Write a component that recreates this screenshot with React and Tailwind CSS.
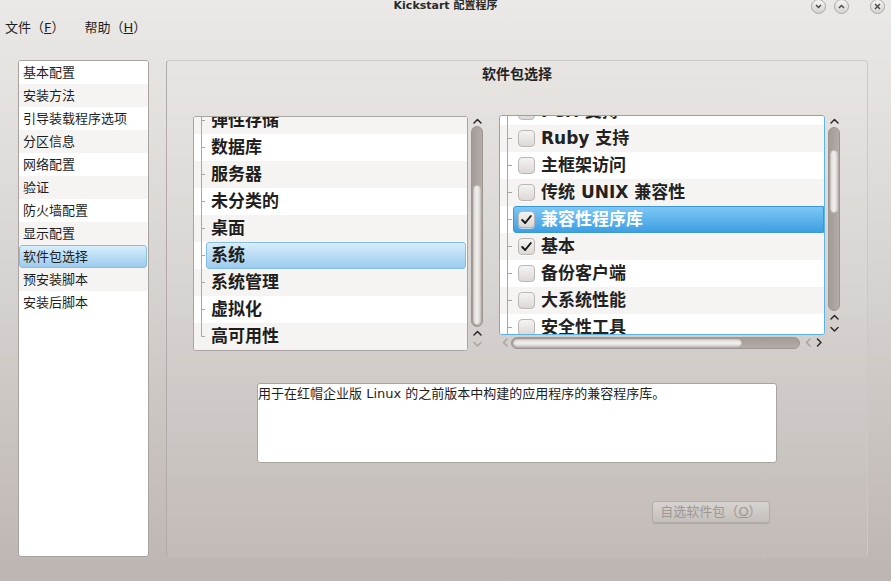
import React from 'react';

const sections = [
  '基本配置', '安装方法', '引导装载程序选项', '分区信息', '网络配置', '验证',
  '防火墙配置', '显示配置', '软件包选择', '预安装脚本', '安装后脚本',
];

const groups = ['弹性存储', '数据库', '服务器', '未分类的', '桌面', '系统', '系统管理', '虚拟化', '高可用性'];

const packages = [
  { name: 'Perl 支持', checked: false },
  { name: 'Ruby 支持', checked: false },
  { name: '主框架访问', checked: false },
  { name: '传统 UNIX 兼容性', checked: false },
  { name: '兼容性程序库', checked: true, selected: true },
  { name: '基本', checked: true },
  { name: '备份客户端', checked: false },
  { name: '大系统性能', checked: false },
  { name: '安全性工具', checked: false },
];

const Chevron = ({ dir = 'up', light = false }) => {
  const paths = {
    up: 'M1 5 L4.5 1.5 L8 5',
    down: 'M1 1.5 L4.5 5 L8 1.5',
    left: 'M5 1 L1.5 4.5 L5 8',
    right: 'M1.5 1 L5 4.5 L1.5 8',
  };
  const vertical = dir === 'up' || dir === 'down';
  return (
    <svg width={vertical ? 9 : 7} height={vertical ? 7 : 9} viewBox={vertical ? '0 0 9 7' : '0 0 7 9'}>
      <path d={paths[dir]} fill="none" stroke={light ? '#aaa5a1' : '#2c2c2c'} strokeWidth="1.5" strokeLinecap="round" strokeLinejoin="round" />
    </svg>
  );
};

const TreeGutter = ({ last, width }) => (
  <svg width={width} height="27" className="shrink-0">
    <line x1="7.5" y1="0" x2="7.5" y2={last ? 13.5 : 27} stroke="#aaa6a2" strokeWidth="1" />
    <line x1="7.5" y1="13.5" x2={width - 1} y2="13.5" stroke="#aaa6a2" strokeWidth="1" />
  </svg>
);

const CheckBox = ({ checked }) => (
  <div className="w-[17px] h-[17px] shrink-0 rounded-[4px] border border-[#bcb7b3] bg-gradient-to-b from-[#f5f4f3] to-[#dcd8d5] shadow-[0_1px_0_rgba(255,255,255,0.6)] flex items-center justify-center">
    {checked && (
      <svg width="13" height="13" viewBox="0 0 13 13">
        <path d="M2.2 7 L5.2 10 L10.8 3" fill="none" stroke="#1a1a1a" strokeWidth="2" strokeLinecap="round" strokeLinejoin="round" />
      </svg>
    )}
  </div>
);

const Groove = ({ grooveClass, handleClass }) => (
  <div className={`w-[12px] rounded-[6px] border border-[#9d9591] bg-gradient-to-r from-[#a39b97] to-[#b4aca8] flex flex-col items-center ${grooveClass}`}>
    <div className={`w-[8px] rounded-[4px] border border-[#c9c4c0] bg-gradient-to-r from-[#dcd8d5] via-[#f3f1ef] to-[#d8d4d1] ${handleClass}`} />
  </div>
);

const WinButton = ({ children }) => (
  <div className="w-[15px] h-[15px] rounded-full border border-[#aaa6a3] bg-gradient-to-b from-[#f6f5f4] to-[#d5d2cf] flex items-center justify-center">
    {children}
  </div>
);

export default function App() {
  return (
    <div className="w-[891px] h-[581px] overflow-hidden flex flex-col bg-gradient-to-b from-[#ebe9e7] via-[#d6d2cf] to-[#bdb5b1] font-['DejaVu_Sans','Noto_Sans_CJK_SC',sans-serif] text-[#1e1e1e]">
      {/* title bar */}
      <div className="relative h-[14px] shrink-0">
        <div className="text-center text-[11px] leading-[12px] font-bold text-[#2a2a2a]">Kickstart 配置程序</div>
        <div className="absolute right-[6px] -top-[1px] flex items-center">
          <div className="flex gap-[8px]">
            <WinButton>
              <svg width="7" height="5" viewBox="0 0 7 5"><path d="M1 1 L3.5 3.5 L6 1" fill="none" stroke="#444" strokeWidth="1.3" /></svg>
            </WinButton>
            <WinButton>
              <svg width="7" height="5" viewBox="0 0 7 5"><path d="M1 4 L3.5 1.5 L6 4" fill="none" stroke="#444" strokeWidth="1.3" /></svg>
            </WinButton>
          </div>
          <div className="ml-[21px]">
            <WinButton>
              <svg width="7" height="7" viewBox="0 0 7 7"><path d="M1 1 L6 6 M6 1 L1 6" fill="none" stroke="#444" strokeWidth="1.3" /></svg>
            </WinButton>
          </div>
        </div>
      </div>

      {/* menu bar */}
      <div className="h-[28px] shrink-0 flex items-center gap-[20px] pl-[5px] text-[13px]">
        <span>文件（<span className="underline">F</span>）</span>
        <span>帮助（<span className="underline">H</span>）</span>
      </div>

      <div className="flex mt-[18px] pl-[18px]">
        {/* sidebar */}
        <div className="w-[131px] h-[497px] shrink-0 bg-white border border-[#a9a3a0] rounded-[3px] overflow-hidden">
          {sections.map((s, i) => {
            const selected = s === '软件包选择';
            return (
              <div key={s} className={`h-[23px] ${i % 2 === 1 ? 'bg-[#f6f4f2]' : 'bg-white'}`}>
                <div
                  className={`h-full mr-[1px] flex items-center pl-[3px] text-[13px] border rounded-[3px] ${
                    selected
                      ? 'bg-gradient-to-b from-[#d8eefc] to-[#9ccbee] border-[#86bde4]'
                      : 'border-transparent'
                  }`}
                >
                  {s}
                </div>
              </div>
            );
          })}
        </div>

        {/* main panel */}
        <div className="ml-[17px] w-[702px] h-[498px] shrink-0 flex flex-col border border-[#cdc8c4] border-l-[#b1aaa6] border-b-transparent rounded-[4px] bg-white/[0.05]">
          <div className="h-[26px] flex items-center justify-center text-[14px] font-bold text-[#222]">软件包选择</div>

          <div className="flex items-start mt-[28px] pl-[26px]">
            {/* group tree */}
            <div className="flex mt-[1px]">
              <div className="w-[275px] h-[235px] bg-white border border-[#aba5a1] rounded-[3px] overflow-hidden">
                <div className="-mt-[10px]">
                  {groups.map((g, i) => {
                    const selected = g === '系统';
                    return (
                      <div key={g} className={`flex h-[27px] ${i % 2 === 0 ? 'bg-[#f6f4f2]' : 'bg-white'}`}>
                        <TreeGutter last={i === groups.length - 1} width={12} />
                        <div
                          className={`flex-1 mr-[1px] flex items-center pl-[4px] text-[17px] font-bold border rounded-[3px] ${
                            selected
                              ? 'bg-gradient-to-b from-[#d8eefc] to-[#9ccbee] border-[#86bde4]'
                              : 'border-transparent'
                          }`}
                        >
                          {g}
                        </div>
                      </div>
                    );
                  })}
                </div>
              </div>
              <div className="ml-[2px] w-[14px] h-[235px] flex flex-col items-center">
                <div className="h-[10px] flex items-center justify-center"><Chevron dir="up" /></div>
                <Groove grooveClass="h-[201px]" handleClass="mt-[58px] h-[140px]" />
                <div className="h-[12px] flex items-center justify-center"><Chevron dir="up" /></div>
                <div className="h-[11px] flex items-center justify-center"><Chevron dir="down" light /></div>
              </div>
            </div>

            {/* package list */}
            <div className="ml-[15px] flex flex-col">
              <div className="flex">
                <div className="w-[326px] h-[220px] bg-white border border-[#5bb3e6] rounded-[3px] overflow-hidden">
                  <div className="-mt-[18px]">
                    {packages.map((p, i) => (
                      <div key={p.name} className={`flex h-[27px] ${i % 2 === 1 ? 'bg-[#f6f4f2]' : 'bg-white'}`}>
                        <TreeGutter last={false} width={13} />
                        <div
                          className={`flex-1 flex items-center pl-[4px] text-[17px] font-bold border rounded-l-[3px] ${
                            p.selected
                              ? 'bg-gradient-to-b from-[#7dc7f5] to-[#3c9fe2] border-[#3b97d8] text-white'
                              : 'border-transparent text-[#222]'
                          }`}
                        >
                          <CheckBox checked={p.checked} />
                          <span className="ml-[6px] whitespace-pre">{p.name}</span>
                        </div>
                      </div>
                    ))}
                  </div>
                </div>
                <div className="ml-[2px] w-[14px] h-[220px] flex flex-col items-center">
                  <div className="h-[12px] flex items-center justify-center"><Chevron dir="up" /></div>
                  <Groove grooveClass="h-[184px]" handleClass="mt-[22px] h-[63px]" />
                  <div className="h-[12px] flex items-center justify-center"><Chevron dir="up" /></div>
                  <div className="h-[12px] flex items-center justify-center"><Chevron dir="down" /></div>
                </div>
              </div>
              <div className="h-[15px] w-[326px] flex items-center">
                <div className="w-[12px] flex justify-center"><Chevron dir="left" light /></div>
                <div className="w-[289px] h-[12px] rounded-[6px] border border-[#9d9591] bg-gradient-to-b from-[#a39b97] to-[#b4aca8] flex items-center">
                  <div className="ml-[1px] w-[229px] h-[8px] rounded-[4px] border border-[#c9c4c0] bg-gradient-to-b from-[#dcd8d5] via-[#f3f1ef] to-[#d8d4d1]" />
                </div>
                <div className="ml-[3px] w-[11px] flex justify-center"><Chevron dir="left" light /></div>
                <div className="w-[11px] flex justify-center"><Chevron dir="right" /></div>
              </div>
            </div>
          </div>

          {/* description */}
          <div className="ml-[90px] mt-[32px] w-[520px] h-[80px] bg-white border border-[#a9a4a0] rounded-[3px] pt-[1px] text-[13px] leading-[17px] whitespace-pre">
            用于在红帽企业版 Linux 的之前版本中构建的应用程序的兼容程序库。
          </div>

          <div className="ml-[485px] mt-[38px] w-[118px] h-[22px] flex items-center justify-center rounded-[3px] border border-[#b3ada9] bg-gradient-to-b from-[#d8d4d1] to-[#c5bfbb] shadow-[0_1px_1px_rgba(0,0,0,0.12)] text-[13px] text-[#9e9894]">
            自选软件包（<span className="underline">O</span>）
          </div>
        </div>
      </div>
    </div>
  );
}
